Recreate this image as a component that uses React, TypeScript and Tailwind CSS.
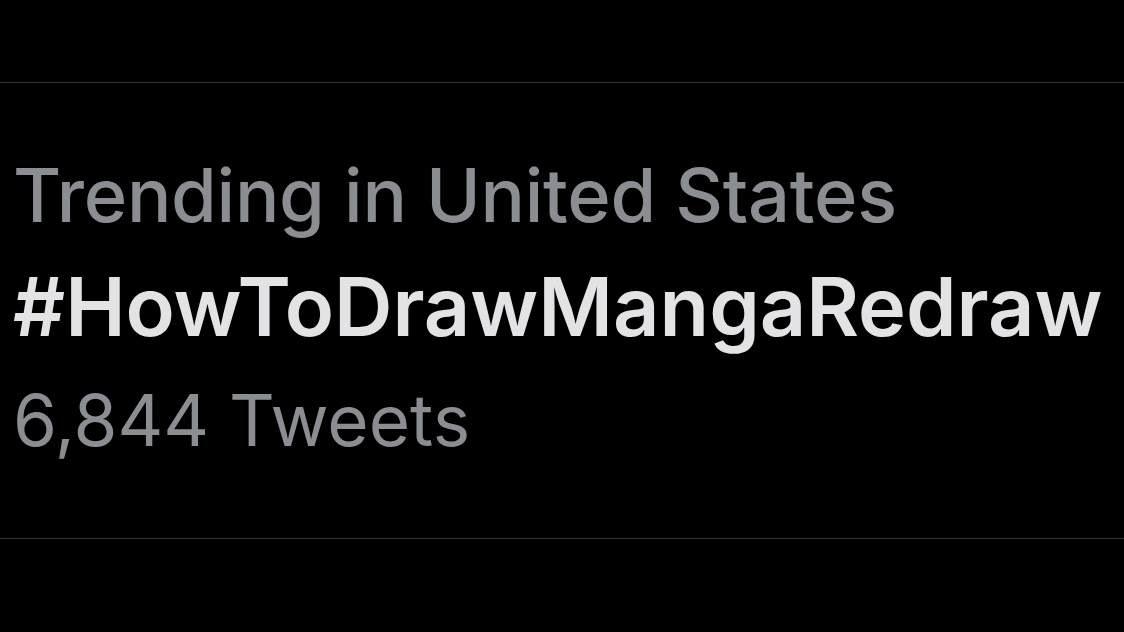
export default function App() {
  return (
    <div className="w-[1124px] h-[632px] bg-black overflow-hidden" style={{ fontFamily: "Inter, 'Liberation Sans', sans-serif" }}>
      <div className="h-[82px]" />
      <div className="h-[457px] border-y border-[#36373b] pl-[13px] pt-[75px]">
        <div className="text-[74px] leading-none font-medium text-[#8a8d92] tracking-[-0.3px]">
          Trending in United States
        </div>
        <div className="mt-[35px] text-[81px] leading-none font-semibold text-[#e3e3e5]">
          #HowToDrawMangaRedraw
        </div>
        <div className="mt-[37px] text-[71px] leading-none text-[#8a8d92]">
          6,844 Tweets
        </div>
      </div>
    </div>
  );
}
